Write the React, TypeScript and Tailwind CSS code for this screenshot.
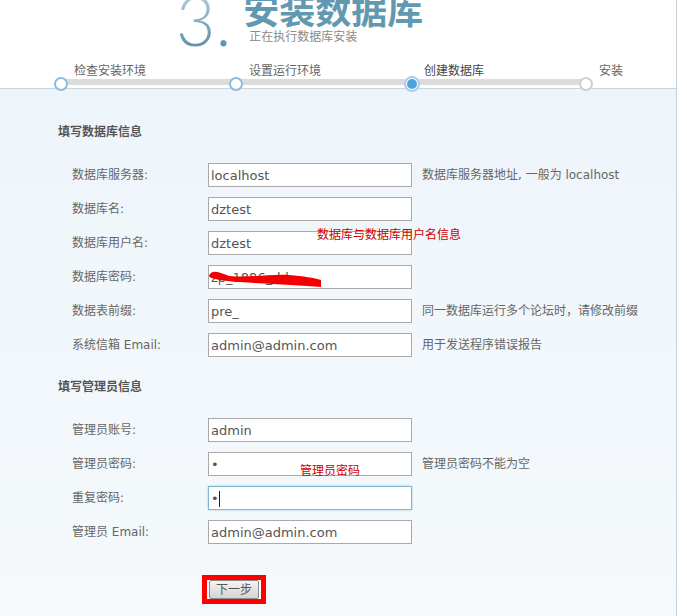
import React from 'react';

const font = "font-['DejaVu_Sans','Noto_Sans_CJK_SC',sans-serif]";

interface Row {
    label: string;
    value: string;
    note?: string;
    focused?: boolean;
    masked?: boolean;
}

const dbRows: Row[] = [
    { label: '数据库服务器:', value: 'localhost', note: '数据库服务器地址, 一般为 localhost' },
    { label: '数据库名:', value: 'dztest' },
    { label: '数据库用户名:', value: 'dztest' },
    { label: '数据库密码:', value: 'zp_1886_dd', masked: true },
    { label: '数据表前缀:', value: 'pre_', note: '同一数据库运行多个论坛时，请修改前缀' },
    { label: '系统信箱 Email:', value: 'admin@admin.com', note: '用于发送程序错误报告' },
];

const adminRows: Row[] = [
    { label: '管理员账号:', value: 'admin' },
    { label: '管理员密码:', value: '•', note: '管理员密码不能为空' },
    { label: '重复密码:', value: '•', focused: true },
    { label: '管理员 Email:', value: 'admin@admin.com' },
];

const steps = [
    { name: '检查安装环境', state: 'done' },
    { name: '设置运行环境', state: 'done' },
    { name: '创建数据库', state: 'current' },
    { name: '安装', state: 'todo' },
];

const FormRow: React.FC<{ row: Row }> = ({ row }) => (
    <div className="flex items-center h-[24px]">
        <div className="w-[150px] shrink-0 pl-[14px] text-[12px] text-[#666]">{row.label}</div>
        <div
            className={`relative w-[204px] shrink-0 h-[24px] bg-white flex items-center pl-[2px] pt-px text-[13px] text-[#555] ${
                row.focused
                    ? 'border border-[#7fb6d6] shadow-[0_0_2px_#9cc8e0]'
                    : 'border border-[#a9a9a9]'
            }`}
        >
            <span>{row.value}</span>
            {row.focused && <span className="w-px h-[16px] bg-[#222]" />}
            {row.masked && (
                <svg className="absolute left-0 top-[3px]" width="115" height="19" viewBox="0 0 115 19">
                    <path
                        d="M1 5 C 4 1, 10 3, 20 7 C 40 9, 60 5, 80 6 C 95 7, 105 9, 112 11 L 112 18 C 95 17, 70 15, 45 14 C 30 13, 15 12, 6 10 C 0 9, -1 7, 1 5 Z"
                        fill="#f20000"
                    />
                </svg>
            )}
        </div>
        {row.note && <div className="ml-[10px] text-[12px] text-[#666] whitespace-nowrap">{row.note}</div>}
    </div>
);

const StepCircle: React.FC<{ state: string }> = ({ state }) => {
    if (state === 'current') {
        return (
            <div className="w-[16px] h-[16px] rounded-full bg-white border-2 border-[#a9cfe8] flex items-center justify-center">
                <div className="w-[10px] h-[10px] rounded-full bg-[#4ea2de]" />
            </div>
        );
    }
    return (
        <div
            className={`w-[14px] h-[14px] rounded-full bg-white border-2 ${
                state === 'done' ? 'border-[#8dbcdb]' : 'border-[#cfcfcf]'
            }`}
        />
    );
};

const App: React.FC = () => {
    return (
        <div className={`w-[687px] h-[616px] bg-white overflow-hidden ${font}`}>
            <div className="w-[677px] h-full border-r border-[#c8cfd4] flex flex-col">
                {/* header */}
                <div className="h-[64px] shrink-0 overflow-hidden flex pl-[176px]">
                    <div className="mt-[-14px] text-[68px] leading-none font-['Lato',sans-serif] font-light bg-gradient-to-b from-[#bcd5e0] to-[#46809c] bg-clip-text text-transparent">
                        3.
                    </div>
                    <div className="ml-[12px] flex flex-col">
                        <div className="mt-[-10px] h-[34px] text-[36px] leading-[36px] font-bold text-[#6199b0] font-['Noto_Sans_CJK_SC',sans-serif] whitespace-nowrap">
                            安装数据库
                        </div>
                        <div className="ml-[6px] mt-[6px] text-[12px] leading-[14px] text-[#8a8a8a] whitespace-nowrap">
                            正在执行数据库安装
                        </div>
                    </div>
                </div>

                {/* steps */}
                <div className="relative h-[25px] shrink-0 border-b border-[#c5d6e0]">
                    <div className="absolute left-[61px] w-[525px] top-[15px] h-[6px] bg-[#dcdcdc]" />
                    <div className="relative flex pl-[54px]">
                        {steps.map(step => (
                            <div key={step.name} className="w-[175px] shrink-0 flex flex-col">
                                <div
                                    className={`pl-[20px] text-[12px] leading-[14px] ${
                                        step.state === 'current' ? 'text-[#444]' : 'text-[#666]'
                                    }`}
                                >
                                    {step.name}
                                </div>
                                <div className="h-[11px] flex items-center">
                                    <StepCircle state={step.state} />
                                </div>
                            </div>
                        ))}
                    </div>
                </div>

                {/* form */}
                <div className="flex-1 bg-gradient-to-b from-[#eef5fa] to-[#f5f9fc] pl-[58px] pt-[36px]">
                    <div className="text-[12px] font-bold text-[#555] leading-[14px]">填写数据库信息</div>
                    <div className="relative mt-[24px] flex flex-col gap-[10px]">
                        {dbRows.map(row => (
                            <FormRow key={row.label} row={row} />
                        ))}
                        <div className="absolute left-[259px] top-[63px] text-[12px] text-[#cc0000]">
                            数据库与数据库用户名信息
                        </div>
                    </div>

                    <div className="mt-[23px] text-[12px] font-bold text-[#555] leading-[14px]">填写管理员信息</div>
                    <div className="relative mt-[24px] flex flex-col gap-[10px]">
                        {adminRows.map(row => (
                            <FormRow key={row.label} row={row} />
                        ))}
                        <div className="absolute left-[242px] top-[44px] text-[12px] text-[#cc0000]">管理员密码</div>
                    </div>

                    <div className="mt-[31px] ml-[144px] w-[64px] h-[29px] border-[5px] border-[#ff0000] bg-white flex items-center justify-center">
                        <button className="w-[50px] h-[19px] border border-[#8c8c8c] rounded-[2px] bg-gradient-to-b from-[#f4f4f4] to-[#d4d4d4] text-[12px] leading-none text-[#555]">
                            下一步
                        </button>
                    </div>
                </div>
            </div>
        </div>
    );
};

export default App;
